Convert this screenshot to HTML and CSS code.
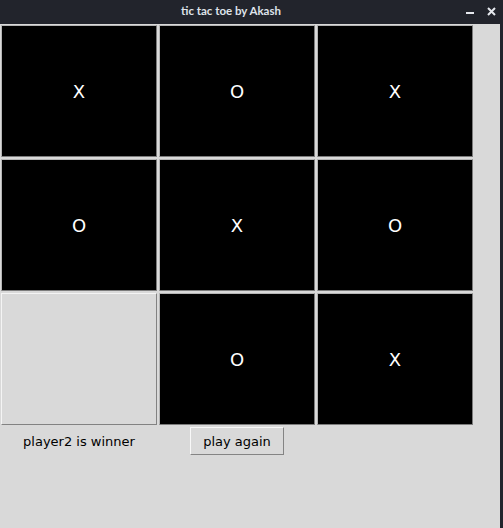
FILE: index.html
```html
<!DOCTYPE html>
<html>
<head>
<meta charset="utf-8">
<link rel="stylesheet" href="styles.css">
</head>
<body>
<div class="window">
  <div class="titlebar">
    <span class="title">tic tac toe by Akash</span>
    <div class="controls">
      <span class="min"></span>
      <svg class="close" width="9" height="9" viewBox="0 0 9 9"><path d="M1 1 L8 8 M8 1 L1 8" stroke="#e6e8ee" stroke-width="2"/></svg>
    </div>
  </div>
  <div class="content">
    <div class="board">
      <div class="cell">X</div>
      <div class="cell">O</div>
      <div class="cell">X</div>
      <div class="cell">O</div>
      <div class="cell">X</div>
      <div class="cell">O</div>
      <div class="cell empty"></div>
      <div class="cell">O</div>
      <div class="cell">X</div>
      <div class="status">player2 is winner</div>
      <button class="again">play again</button>
    </div>
  </div>
</div>
</body>
</html>
```
FILE: styles.css
```css
html, body {
  margin: 0;
  padding: 0;
  background: #22242c;
}
.window {
  width: 503px;
  height: 528px;
  display: flex;
  flex-direction: column;
}
.titlebar {
  height: 24px;
  flex: none;
  background: #22242c;
  position: relative;
  display: flex;
  align-items: center;
  justify-content: center;
  padding-right: 41px;
}
.title {
  font-family: Lato, "Open Sans", sans-serif;
  font-weight: bold;
  font-size: 11.5px;
  color: #dfe3ea;
  margin-top: -4px;
}
.controls {
  position: absolute;
  right: 7px;
  top: 7px;
  display: flex;
  align-items: flex-start;
  gap: 13px;
}
.min {
  display: block;
  width: 8px;
  height: 2px;
  background: #e6e8ee;
  margin-top: 5px;
}
.close {
  display: block;
  margin-top: 0px;
}
.content {
  flex: 1;
  background: #d9d9d9;
  margin-right: 3px;
  padding: 1px 0 0 1px;
}
.board {
  display: grid;
  grid-template-columns: 156px 156px 156px;
  grid-template-rows: 132px 132px 132px auto;
  column-gap: 2px;
  row-gap: 2px;
}
.cell {
  box-sizing: border-box;
  background: #000;
  border: 1px solid;
  border-color: #b4b4b4 #7c7c7c #7c7c7c #b4b4b4;
  color: #fff;
  font-family: "DejaVu Sans", sans-serif;
  font-size: 18px;
  display: flex;
  align-items: center;
  justify-content: center;
}
.cell.empty {
  background: #d9d9d9;
  border-color: #f4f4f4 #828282 #828282 #f4f4f4;
}
.status {
  justify-self: center;
  align-self: start;
  height: 28px;
  line-height: 29px;
  font-family: "DejaVu Sans", sans-serif;
  font-size: 13px;
  color: #000;
}
.again {
  grid-column: 2;
  justify-self: center;
  align-self: start;
  width: 94px;
  height: 28px;
  box-sizing: border-box;
  background: #d9d9d9;
  border: 1px solid;
  border-color: #f8f8f8 #848484 #848484 #f8f8f8;
  font-family: "DejaVu Sans", sans-serif;
  font-size: 13px;
  color: #000;
  padding: 0;
  margin: 0;
}
```
